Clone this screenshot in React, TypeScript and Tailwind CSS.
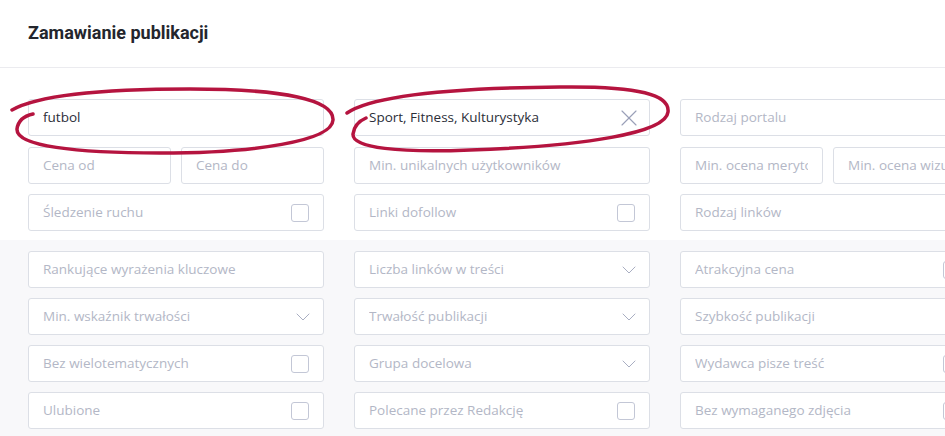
import { X, ChevronDown } from 'lucide-react';

type Field = {
  label: string;
  value?: boolean;
  kind?: 'check' | 'select' | 'clear' | 'text';
};

type Row = Field | [Field, Field];

const topRows: Row[][] = [
  [
    { label: 'futbol', value: true },
    [{ label: 'Cena od' }, { label: 'Cena do' }],
    { label: 'Śledzenie ruchu', kind: 'check' },
  ],
  [
    { label: 'Sport, Fitness, Kulturystyka', value: true, kind: 'clear' },
    { label: 'Min. unikalnych użytkowników' },
    { label: 'Linki dofollow', kind: 'check' },
  ],
  [
    { label: 'Rodzaj portalu', kind: 'select' },
    [{ label: 'Min. ocena merytoryczna' }, { label: 'Min. ocena wizualna' }],
    { label: 'Rodzaj linków', kind: 'select' },
  ],
];

const bottomRows: Field[][] = [
  [
    { label: 'Rankujące wyrażenia kluczowe' },
    { label: 'Min. wskaźnik trwałości', kind: 'select' },
    { label: 'Bez wielotematycznych', kind: 'check' },
    { label: 'Ulubione', kind: 'check' },
  ],
  [
    { label: 'Liczba linków w treści', kind: 'select' },
    { label: 'Trwałość publikacji', kind: 'select' },
    { label: 'Grupa docelowa', kind: 'select' },
    { label: 'Polecane przez Redakcję', kind: 'check' },
  ],
  [
    { label: 'Atrakcyjna cena', kind: 'check' },
    { label: 'Szybkość publikacji', kind: 'select' },
    { label: 'Wydawca pisze treść', kind: 'check' },
    { label: 'Bez wymaganego zdjęcia', kind: 'check' },
  ],
];

function Input({ field }: { field: Field }) {
  return (
    <div className="flex h-[37px] shrink-0 items-center overflow-hidden rounded-[3px] border border-[#dcdfe6] bg-white pl-[14px] pr-[14px]">
      <span
        className={`min-w-0 flex-1 overflow-hidden whitespace-nowrap text-[13.5px] ${
          field.value ? 'text-[#2b2e38]' : 'text-[#b3b7c6]'
        }`}
      >
        {field.label}
      </span>
      {field.kind === 'check' && (
        <span className="ml-2 h-[18px] w-[18px] shrink-0 rounded-[3px] border border-[#c3c7d6] bg-white" />
      )}
      {field.kind === 'select' && (
        <ChevronDown className="-mr-[6px] shrink-0 text-[#a9aec2]" size={24} strokeWidth={1} />
      )}
      {field.kind === 'clear' && (
        <X className="-mr-[8px] shrink-0 text-[#9aa0b8]" size={28} strokeWidth={1} />
      )}
    </div>
  );
}

function RowView({ row }: { row: Row }) {
  if (Array.isArray(row)) {
    return (
      <div className="flex gap-[10px]">
        <div className="min-w-0 flex-1">
          <Input field={row[0]} />
        </div>
        <div className="min-w-0 flex-1">
          <Input field={row[1]} />
        </div>
      </div>
    );
  }
  return <Input field={row} />;
}

export default function App() {
  return (
    <div
      className="relative h-[436px] w-[945px] overflow-hidden bg-white"
      style={{ fontFamily: '"Open Sans", "Noto Sans", sans-serif' }}
    >
      <div className="flex h-[68px] items-center border-b border-[#ebebef] pl-[28px] pb-[3px]">
        <h1
          className="text-[18px] font-bold text-[#24262d]"
          style={{ fontFamily: 'Roboto, "Noto Sans", sans-serif' }}
        >
          Zamawianie publikacji
        </h1>
      </div>

      <div className="flex gap-[30px] pl-[28px] pt-[31px] pb-[9px]">
        {topRows.map((col, i) => (
          <div key={i} className="flex w-[296px] shrink-0 flex-col gap-[10.5px]">
            {col.map((row, j) => (
              <RowView key={j} row={row} />
            ))}
          </div>
        ))}
      </div>

      <div className="flex gap-[30px] bg-[#f8f8fa] pl-[28px] pt-[11px] pb-[10px]">
        {bottomRows.map((col, i) => (
          <div key={i} className="flex w-[296px] shrink-0 flex-col gap-[10px]">
            {col.map((f, j) => (
              <Input key={j} field={f} />
            ))}
          </div>
        ))}
      </div>

      {/* hand-drawn highlight marks */}
      <svg
        className="pointer-events-none absolute left-0 top-0"
        width="945"
        height="436"
        fill="none"
      >
        <path
          d="M12 110 C 40 94, 110 89, 190 89 C 285 89, 334 100, 333 120 C 332 141, 255 153, 160 153 C 75 153, 16 146, 17 129 C 18 121, 24 116, 33 114"
          stroke="#b5143f"
          strokeWidth="3.5"
          strokeLinecap="round"
        />
        <path
          d="M347 113 C 372 96, 450 88, 560 87 C 640 86, 670 95, 668 112 C 666 133, 585 146, 470 150 C 400 153, 352 148, 353 134 C 354 126, 359 121, 366 118"
          stroke="#b5143f"
          strokeWidth="3.5"
          strokeLinecap="round"
        />
      </svg>
    </div>
  );
}
